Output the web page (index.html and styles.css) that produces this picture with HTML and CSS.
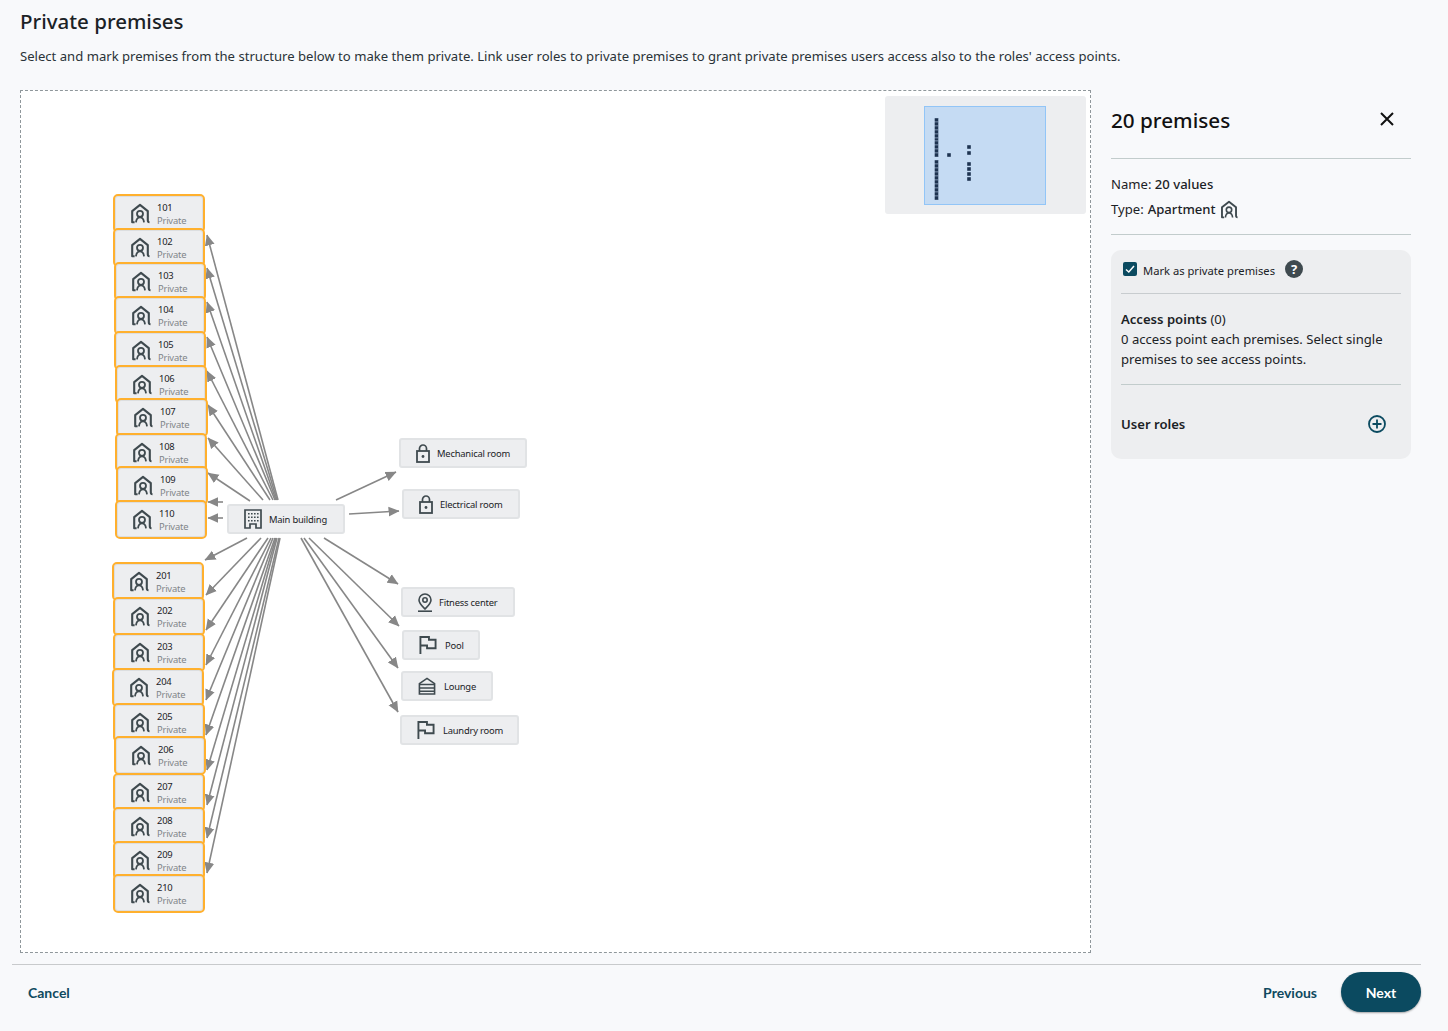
FILE: index.html
```html
<!DOCTYPE html>
<html lang="en">
<head>
<meta charset="utf-8">
<title>Private premises</title>
<link rel="stylesheet" href="styles.css">
</head>
<body>
<svg class="defs" width="0" height="0" aria-hidden="true">
  <defs>
    <symbol id="apt" viewBox="0 0 20 20">
      <path d="M4.600 18.700H2.200V7.600L10 1.400l7.800 6.200v9.100c0 1.300.6 2 1.700 2" fill="none" stroke="currentColor" stroke-width="2.100" stroke-linejoin="round"/>
      <circle cx="10" cy="10.300" r="3" fill="none" stroke="currentColor" stroke-width="1.800"/>
      <path d="M6 18.900c.3-3 1.900-5 4-5s3.700 2 4 5" fill="none" stroke="currentColor" stroke-width="1.800"/>
    </symbol>
    <symbol id="bld" viewBox="0 0 18 20">
      <path d="M1 19V1h16v18h-5v-4H6v4z" fill="none" stroke="currentColor" stroke-width="1.700"/>
      <path d="M4 4h1.600v1.600H4zM7 4h1.600v1.600H7zM10 4h1.600v1.600H10zM13 4h1.600v1.600H13zM4 7.500h1.600v1.600H4zM7 7.500h1.600v1.600H7zM10 7.500h1.600v1.600H10zM13 7.500h1.600v1.600H13zM4 11h1.600v1.600H4zM7 11h1.600v1.600H7zM10 11h1.600v1.600H10zM13 11h1.600v1.600H13z" fill="currentColor"/>
    </symbol>
    <symbol id="lock" viewBox="0 0 14 19">
      <rect x="1" y="7" width="12" height="11" fill="none" stroke="currentColor" stroke-width="1.800"/>
      <path d="M3.500 7V4.500a3.500 3.500 0 0 1 7 0V7" fill="none" stroke="currentColor" stroke-width="1.700"/>
      <circle cx="7" cy="12.500" r="1.400" fill="currentColor"/>
    </symbol>
    <symbol id="pin" viewBox="0 0 14 19">
      <path d="M7 1a6 6 0 0 0-6 6c0 3.500 3.500 6.500 6 9 2.500-2.500 6-5.500 6-9a6 6 0 0 0-6-6z" fill="none" stroke="currentColor" stroke-width="1.600"/>
      <circle cx="7" cy="7" r="2.200" fill="none" stroke="currentColor" stroke-width="1.600"/>
      <path d="M0 18.200h14" stroke="currentColor" stroke-width="1.600"/>
    </symbol>
    <symbol id="flag" viewBox="0 0 18 19">
      <path d="M1 19V1h9v3h7v9H8v-3H1" fill="none" stroke="currentColor" stroke-width="2"/>
    </symbol>
    <symbol id="lng" viewBox="0 0 18 19">
      <path d="M1 18V7l8-5.500L17 7v11z" fill="none" stroke="currentColor" stroke-width="1.700"/>
      <path d="M1 8h16M1 11.500h16M1 15h16" stroke="currentColor" stroke-width="1.600"/>
    </symbol>
    <marker id="head" viewBox="0 0 10 10" refX="9.500" refY="5" markerUnits="userSpaceOnUse" markerWidth="11" markerHeight="11" orient="auto">
      <path d="M0 0.500L10 5 0 9.500z" fill="#878787"/>
    </marker>
  </defs>
</svg>

<div class="page">
  <header class="head">
    <h1 class="title">Private premises</h1>
    <p class="intro">Select and mark premises from the structure below to make them private. Link user roles to private premises to grant private premises users access also to the roles' access points.</p>
  </header>

  <main class="body">
    <section class="canvas">
      <div class="stage">
      <svg class="edges" viewBox="0 0 1071 862" width="1071" height="862">
        <g transform="translate(-21 -92)" class="edge-lines">
          <line x1="278" y1="500" x2="207" y2="235"/>
          <line x1="277" y1="500" x2="207" y2="268"/>
          <line x1="276" y1="500" x2="207" y2="302"/>
          <line x1="275" y1="500" x2="207" y2="337"/>
          <line x1="273" y1="500" x2="207" y2="371"/>
          <line x1="270" y1="500" x2="208" y2="405"/>
          <line x1="263" y1="500" x2="208" y2="438"/>
          <line x1="250" y1="501" x2="208" y2="473"/>
          <line x1="223" y1="502" x2="208" y2="502"/>
          <line x1="223" y1="518" x2="208" y2="518"/>
          <line x1="247" y1="538" x2="205" y2="560"/>
          <line x1="261" y1="538" x2="206" y2="595"/>
          <line x1="268" y1="538" x2="206" y2="630"/>
          <line x1="271" y1="538" x2="206" y2="665"/>
          <line x1="273" y1="538" x2="206" y2="700"/>
          <line x1="275" y1="538" x2="206" y2="735"/>
          <line x1="276" y1="538" x2="207" y2="770"/>
          <line x1="277" y1="538" x2="207" y2="805"/>
          <line x1="279" y1="538" x2="207" y2="838"/>
          <line x1="280" y1="538" x2="207" y2="873"/>
          <line x1="336" y1="500" x2="396" y2="472"/>
          <line x1="349" y1="514" x2="399" y2="511"/>
          <line x1="324" y1="538" x2="398" y2="584"/>
          <line x1="309" y1="538" x2="399" y2="626"/>
          <line x1="304" y1="538" x2="398" y2="668"/>
          <line x1="301" y1="538" x2="398" y2="712"/>
        </g>
      </svg>

      <div class="node apt" style="left:92px;top:102px"><svg class="ico"><use href="#apt"/></svg><span class="txt"><b>101</b><i>Private</i></span></div>
      <div class="node apt" style="left:92px;top:136px"><svg class="ico"><use href="#apt"/></svg><span class="txt"><b>102</b><i>Private</i></span></div>
      <div class="node apt" style="left:93px;top:170px"><svg class="ico"><use href="#apt"/></svg><span class="txt"><b>103</b><i>Private</i></span></div>
      <div class="node apt" style="left:93px;top:204px"><svg class="ico"><use href="#apt"/></svg><span class="txt"><b>104</b><i>Private</i></span></div>
      <div class="node apt" style="left:93px;top:239px"><svg class="ico"><use href="#apt"/></svg><span class="txt"><b>105</b><i>Private</i></span></div>
      <div class="node apt" style="left:94px;top:273px"><svg class="ico"><use href="#apt"/></svg><span class="txt"><b>106</b><i>Private</i></span></div>
      <div class="node apt" style="left:95px;top:306px"><svg class="ico"><use href="#apt"/></svg><span class="txt"><b>107</b><i>Private</i></span></div>
      <div class="node apt" style="left:94px;top:341px"><svg class="ico"><use href="#apt"/></svg><span class="txt"><b>108</b><i>Private</i></span></div>
      <div class="node apt" style="left:95px;top:374px"><svg class="ico"><use href="#apt"/></svg><span class="txt"><b>109</b><i>Private</i></span></div>
      <div class="node apt" style="left:94px;top:408px"><svg class="ico"><use href="#apt"/></svg><span class="txt"><b>110</b><i>Private</i></span></div>

      <div class="node apt" style="left:91px;top:470px"><svg class="ico"><use href="#apt"/></svg><span class="txt"><b>201</b><i>Private</i></span></div>
      <div class="node apt" style="left:92px;top:505px"><svg class="ico"><use href="#apt"/></svg><span class="txt"><b>202</b><i>Private</i></span></div>
      <div class="node apt" style="left:92px;top:541px"><svg class="ico"><use href="#apt"/></svg><span class="txt"><b>203</b><i>Private</i></span></div>
      <div class="node apt" style="left:91px;top:576px"><svg class="ico"><use href="#apt"/></svg><span class="txt"><b>204</b><i>Private</i></span></div>
      <div class="node apt" style="left:92px;top:611px"><svg class="ico"><use href="#apt"/></svg><span class="txt"><b>205</b><i>Private</i></span></div>
      <div class="node apt" style="left:93px;top:644px"><svg class="ico"><use href="#apt"/></svg><span class="txt"><b>206</b><i>Private</i></span></div>
      <div class="node apt" style="left:92px;top:681px"><svg class="ico"><use href="#apt"/></svg><span class="txt"><b>207</b><i>Private</i></span></div>
      <div class="node apt" style="left:92px;top:715px"><svg class="ico"><use href="#apt"/></svg><span class="txt"><b>208</b><i>Private</i></span></div>
      <div class="node apt" style="left:92px;top:749px"><svg class="ico"><use href="#apt"/></svg><span class="txt"><b>209</b><i>Private</i></span></div>
      <div class="node apt" style="left:92px;top:782px"><svg class="ico"><use href="#apt"/></svg><span class="txt"><b>210</b><i>Private</i></span></div>

      <div class="node room" style="left:206px;top:412px;width:118px"><svg class="ico ico-b"><use href="#bld"/></svg><span class="lbl">Main building</span></div>
      <div class="node room" style="left:378px;top:346px;width:128px"><svg class="ico ico-s"><use href="#lock"/></svg><span class="lbl">Mechanical room</span></div>
      <div class="node room" style="left:381px;top:397px;width:118px"><svg class="ico ico-s"><use href="#lock"/></svg><span class="lbl">Electrical room</span></div>
      <div class="node room" style="left:380px;top:495px;width:114px"><svg class="ico ico-s"><use href="#pin"/></svg><span class="lbl">Fitness center</span></div>
      <div class="node room" style="left:381px;top:538px;width:78px"><svg class="ico ico-f"><use href="#flag"/></svg><span class="lbl">Pool</span></div>
      <div class="node room" style="left:380px;top:579px;width:92px"><svg class="ico ico-f"><use href="#lng"/></svg><span class="lbl">Lounge</span></div>
      <div class="node room" style="left:379px;top:623px;width:119px"><svg class="ico ico-f"><use href="#flag"/></svg><span class="lbl">Laundry room</span></div>
      </div>

      <div class="minimap">
        <svg class="view" viewBox="0 0 122 99" width="122" height="99">
          <g class="dots">
            <rect x="10.500" y="12" width="4" height="4"/><rect x="10.500" y="16" width="4" height="4"/><rect x="10.500" y="20" width="4" height="4"/><rect x="10.500" y="24" width="4" height="4"/><rect x="10.500" y="28" width="4" height="4"/><rect x="10.500" y="32" width="4" height="3"/><rect x="10.500" y="35" width="4" height="4"/><rect x="10.500" y="39" width="4" height="4"/><rect x="10.500" y="43" width="4" height="4"/><rect x="10.500" y="47" width="4" height="4"/>
            <rect x="10.500" y="54" width="4" height="4"/><rect x="10.500" y="58" width="4" height="4"/><rect x="10.500" y="62" width="4" height="4"/><rect x="10.500" y="66" width="4" height="4"/><rect x="10.500" y="70" width="4" height="4"/><rect x="10.500" y="74" width="4" height="4"/><rect x="10.500" y="78" width="4" height="4"/><rect x="10.500" y="82" width="4" height="4"/><rect x="10.500" y="86" width="4" height="4"/><rect x="10.500" y="90" width="4" height="4"/>
            <rect x="23" y="47" width="4" height="4"/>
            <rect x="43" y="39" width="4" height="4"/><rect x="43" y="45" width="4" height="4"/><rect x="43" y="56" width="4" height="4"/><rect x="43" y="61" width="4" height="4"/><rect x="43" y="66" width="4" height="4"/><rect x="43" y="71" width="4" height="4"/>
          </g>
        </svg>
      </div>
    </section>

    <aside class="panel">
      <div class="panel-head">
        <h2 class="panel-title">20 premises</h2>
        <svg class="close" viewBox="0 0 14 14" width="14" height="14"><path d="M1 1l12 12M13 1L1 13" stroke="#111" stroke-width="2" fill="none"/></svg>
      </div>
      <div class="info">
        <p class="info-row">Name: <strong>20 values</strong></p>
        <p class="info-row type">Type: <strong>Apartment</strong> <svg class="ico-type"><use href="#apt"/></svg></p>
      </div>
      <div class="card">
        <div class="mark">
          <span class="check"><svg viewBox="0 0 14 14" width="14" height="14"><path d="M3 7.500l2.800 2.500L11 4" fill="none" stroke="#fff" stroke-width="1.500"/></svg></span>
          <span class="mark-label">Mark as private premises</span>
          <span class="help">?</span>
        </div>
        <div class="access">
          <p class="access-title"><strong>Access points</strong> (0)</p>
          <p>0 access point each premises. Select single premises to see access points.</p>
        </div>
        <div class="roles">
          <strong>User roles</strong>
          <svg class="plus" viewBox="0 0 20 20" width="20" height="20"><circle cx="10" cy="10" r="8" fill="none" stroke="#0b4a60" stroke-width="1.800"/><path d="M10 5.500v9M5.500 10h9" stroke="#0b4a60" stroke-width="1.800"/></svg>
        </div>
      </div>
    </aside>
  </main>

  <footer class="foot">
    <a class="btn-text cancel">Cancel</a>
    <a class="btn-text prev">Previous</a>
    <button class="next" type="button">Next</button>
  </footer>
</div>
</body>
</html>
```
FILE: styles.css
```css
* { box-sizing: border-box; }
html, body { margin: 0; padding: 0; }
body {
  background: #f8f9fb;
  color: #1b2226;
  font-family: "Noto Sans", "Open Sans", sans-serif;
  font-size: 13.3px;
}
.defs { position: absolute; }
p { margin: 0; }
strong { font-weight: 500; }

.page { width: 1448px; height: 1031px; display: flex; flex-direction: column; overflow: hidden; }

.head { padding: 6px 20px 0; height: 90px; flex: none; }
.title { margin: 0; font-size: 20.500px; line-height: 30px; font-weight: 500; color: #1b2226; }
.intro { margin-top: 10px; font-size: 13.100px; line-height: 20px; color: #2a3338; white-space: nowrap; }

.body { display: flex; height: 863px; flex: none; padding-left: 20px; }

.canvas {
  position: relative;
  width: 1071px;
  height: 863px;
  flex: none;
  background: #fff;
  border: 1px dashed #8f979b;
}
.stage { position: absolute; left: 0; top: 1px; width: 1069px; height: 860px; }
.edges { position: absolute; left: 0; top: 0; }
.edge-lines line { stroke: #878787; stroke-width: 1.6; marker-end: url(#head); }

.node {
  position: absolute;
  display: flex;
  align-items: center;
  background: #edeef0;
  border-radius: 3px;
  color: #1b2226;
}
.apt {
  width: 92px;
  height: 39px;
  border: 2px solid #ffb02e;
  border-radius: 5px;
  box-shadow: inset 0 0 0 1px #dcdee0;
  padding-left: 15px;
  gap: 7px;
}
.apt .ico { width: 20px; height: 21px; margin-top: 0; }
.room {
  height: 30px;
  border: 2px solid #e1e3e5;
  padding-left: 15px;
  gap: 7px;
}
.ico { display: block; flex: none; color: #3f4a4f; width: 19px; height: 20px; }
.ico-b { width: 18px; height: 20px; }
.ico-s { width: 14px; height: 19px; }
.ico-f { width: 18px; height: 18px; margin-right: 1px; }
.txt { display: flex; flex-direction: column; font-size: 9.400px; letter-spacing: -.2px; line-height: 12.500px; margin-top: 2.500px; }
.txt b { font-weight: 400; color: #1b2226; }
.txt i { font-style: normal; color: #7f8589; }
.lbl { font-size: 9.400px; letter-spacing: -.2px; white-space: nowrap; }

.minimap {
  position: absolute;
  right: 4px;
  top: 5px;
  width: 201px;
  height: 118px;
  background: #edeef0;
  border-radius: 3px;
  display: flex;
  justify-content: center;
  padding-top: 10px;
}
.view { display: block; background: #c5dbf3; box-shadow: inset 0 0 0 1px #92c5f7; margin-right: 2px; }
.dots rect { fill: #1d3350; stroke: #c5dbf3; stroke-width: .4; }

.panel { width: 300px; margin-left: 20px; flex: none; }
.panel-head {
  height: 69px;
  display: flex;
  align-items: center;
  justify-content: space-between;
  border-bottom: 1px solid #c2cccc;
  padding: 0 17px 9px 0;
}
.panel-title { margin: 0; font-size: 20.700px; font-weight: 500; line-height: 30px; color: #111; }
.close { display: block; margin-top: -2px; }
.info { height: 76px; border-bottom: 1px solid #c2cccc; padding-top: 15px; margin-bottom: 15px; }
.info-row { font-size: 13.100px; line-height: 20px; }
.type { margin-top: 5px; display: flex; align-items: center; gap: 4px; height: 20px; }
.ico-type { width: 18px; height: 19px; color: #3f4a4f; }

.card { background: #edeef0; border-radius: 10px; padding: 0 10px; height: 209px; font-size: 13.100px; line-height: 20px; }
.card strong { font-weight: 600; }
.mark { height: 44px; display: flex; align-items: center; border-bottom: 1px solid #c8cccf; padding-left: 2px; }
.check { width: 14px; height: 14px; background: #0b4a60; border-radius: 2px; display: block; margin-top: -6px; }
.check svg { display: block; }
.mark-label { margin-left: 6px; font-size: 11.200px; margin-top: -2px; }
.help {
  width: 18px;
  height: 18px;
  margin-left: 10px;
  margin-top: -5px;
  border-radius: 50%;
  background: #3f4a4f;
  color: #fff;
  font-size: 13px;
  font-weight: 700;
  line-height: 18px;
  text-align: center;
}
.access { height: 91px; padding-top: 15px; border-bottom: 1px solid #c2cccc; }
.roles { height: 74px; display: flex; align-items: center; justify-content: space-between; padding: 4px 14px 0 0; }
.plus { display: block; }

.foot {
  flex: none;
  margin: 11px 27px 0 12px;
  padding: 7px 0 0 16px;
  border-top: 1px solid #c8cacc;
  display: flex;
  align-items: center;
  height: 48px;
  font-family: "Lato", sans-serif;
  font-size: 14px;
  font-weight: 700;
}
.btn-text { color: #0f4a60; }
.cancel { margin-right: auto; }
.prev { margin-right: 24px; }
.next {
  width: 80px;
  height: 40px;
  border: 0;
  border-radius: 20px;
  background: #0b4a60;
  color: #fff;
  font: inherit;
  box-shadow: 0 1px 2px rgba(0, 0, 0, .35);
}
```
